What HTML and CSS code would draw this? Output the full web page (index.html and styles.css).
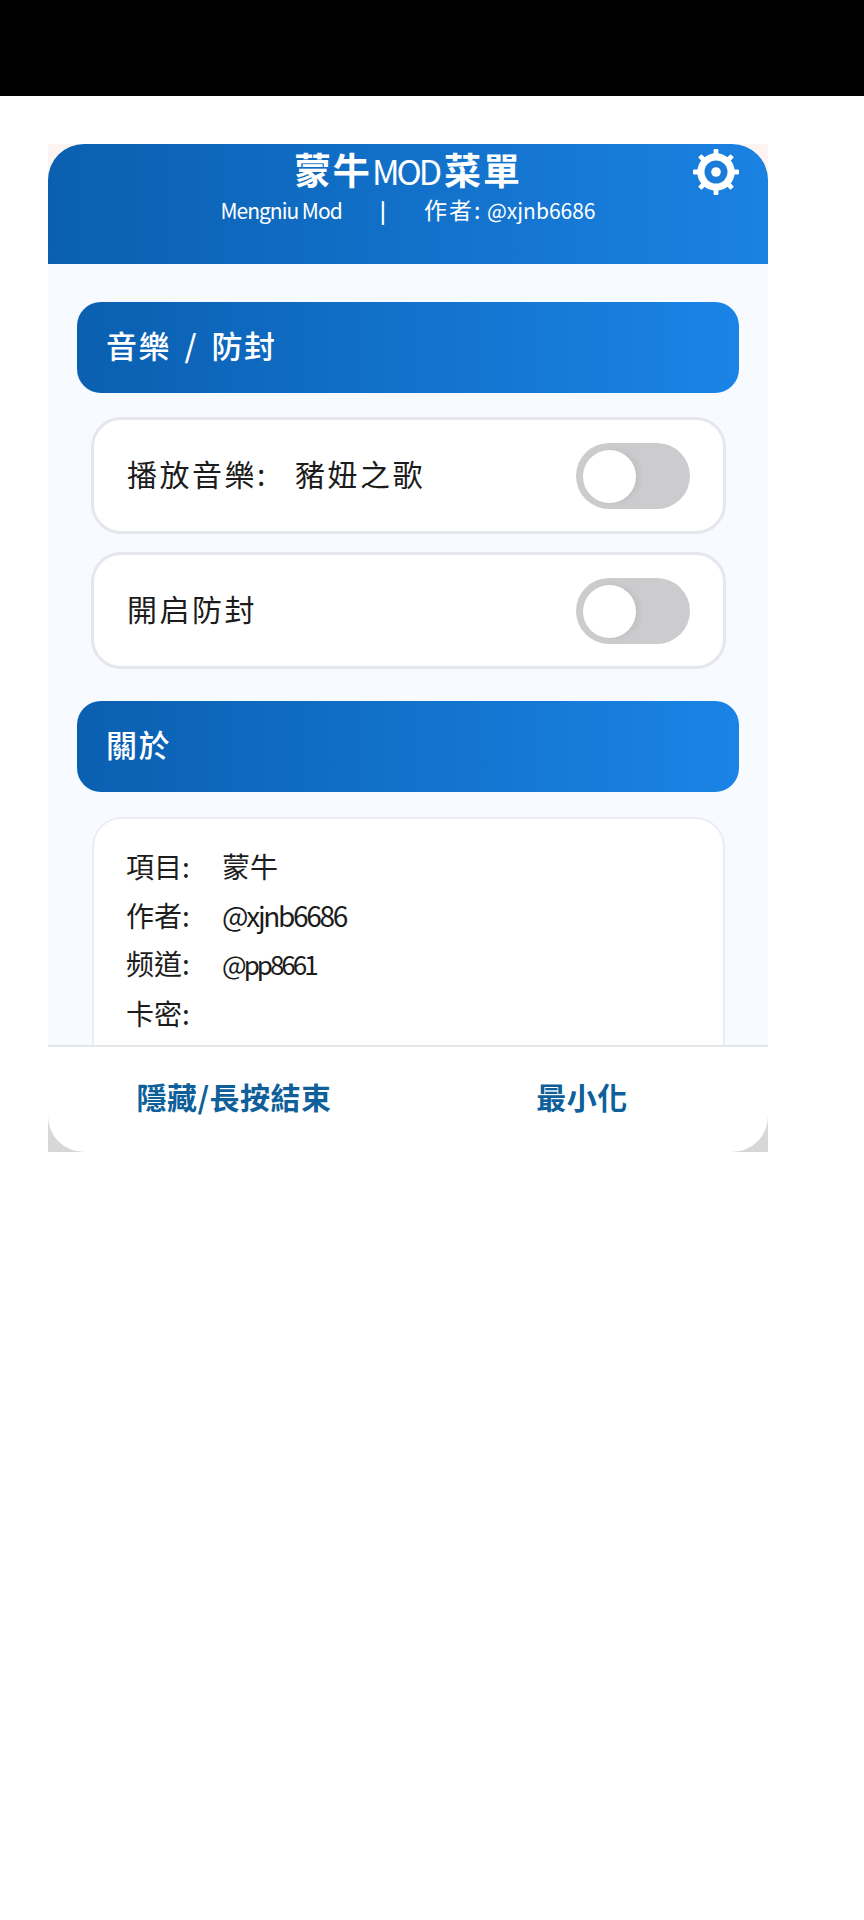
FILE: index.html
```html
<!DOCTYPE html>
<html lang="zh-Hant">
<head>
    <meta charset="UTF-8">
    <title>蒙牛MOD菜單</title>
    <link rel="stylesheet" href="styles.css">
</head>
<body>
    <div class="status-bar"></div>

    <div class="menu">
        <header class="menu-header">
            <h1 class="menu-title">蒙牛<span class="title-latin">MOD</span>菜單</h1>
            <p class="menu-sub"><span class="sub-name">Mengniu Mod</span><span class="sep">|</span><span class="sub-label">作者:</span> @xjnb6686</p>
            <svg class="gear" viewBox="0 0 48 48" aria-hidden="true">
                <g fill="#fff">
                    <rect x="21.5" y="0" width="5" height="48" rx="1"/>
                    <rect x="21.5" y="0" width="5" height="48" rx="1" transform="rotate(45 24 24)"/>
                    <rect x="21.5" y="0" width="5" height="48" rx="1" transform="rotate(90 24 24)"/>
                    <rect x="21.5" y="0" width="5" height="48" rx="1" transform="rotate(135 24 24)"/>
                    <circle cx="24" cy="24" r="19.5"/>
                </g>
                <circle cx="24" cy="24" r="12" fill="#1a7bd8"/>
                <circle cx="24" cy="24" r="5" fill="#fff"/>
            </svg>
        </header>

        <main class="menu-body">
            <h2 class="section-bar">音樂 / 防封</h2>
            <div class="row">
                <span class="row-label">播放音樂: 豬妞之歌</span>
                <span class="toggle"><span class="knob"></span></span>
            </div>
            <div class="row">
                <span class="row-label">開启防封</span>
                <span class="toggle"><span class="knob"></span></span>
            </div>

            <h2 class="section-bar section-about">關於</h2>
            <div class="about">
                <p>項目: 蒙牛</p>
                <p>作者: <span class="handle">@xjnb6686</span></p>
                <p>频道: <span class="handle handle-tight">@pp8661</span></p>
                <p>卡密:</p>
            </div>
        </main>

        <footer class="menu-footer">
            <button class="foot-btn">隱藏/長按結束</button>
            <button class="foot-btn">最小化</button>
        </footer>
    </div>
</body>
</html>
```

FILE: styles.css
```css
body {
    margin: 0;
    background-color: #fff;
    font-family: "Noto Sans CJK TC", "Noto Sans", sans-serif;
    height: 1920px;
    overflow: hidden;
}
.status-bar {
    height: 96px;
    background-color: #000;
}
.menu {
    width: 720px;
    height: 1008px;
    margin: 48px 0 0 48px;
    display: flex;
    flex-direction: column;
    background: linear-gradient(#fdf3f1 0, #f4f6fa 70%, #d6d6d6 100%);
}
.menu-header {
    position: relative;
    height: 120px;
    flex: none;
    box-sizing: border-box;
    padding-top: 5px;
    text-align: center;
    color: #fff;
    background: linear-gradient(90deg, #0a5fb0, #1a82e2);
    border-radius: 36px 36px 0 0;
}
.menu-title {
    margin: 0;
    font-size: 37px;
    line-height: 40px;
    font-weight: 700;
    letter-spacing: 2px;
}
.title-latin {
    font-size: 34px;
    font-weight: 400;
    letter-spacing: -3px;
    margin-right: 5px;
}
.menu-sub {
    margin: 3px 0 0;
    font-size: 21px;
    line-height: 30px;
}
.sub-name {
    letter-spacing: -1px;
}
.sub-label {
    font-size: 23px;
    letter-spacing: 2px;
}
.sep {
    margin: 0 38px;
    font-weight: 700;
}
.gear {
    position: absolute;
    top: 5px;
    right: 29px;
    width: 46px;
    height: 46px;
}
.menu-body {
    flex: 1;
    min-height: 0;
    overflow: hidden;
    background-color: #f7faff;
    padding: 38px 29px 0;
}
.section-bar {
    margin: 0;
    height: 91px;
    box-sizing: border-box;
    padding: 0 0 6px 29px;
    display: flex;
    align-items: center;
    font-size: 31px;
    font-weight: 500;
    letter-spacing: 1.5px;
    word-spacing: 5px;
    color: #fff;
    background: linear-gradient(90deg, #0a5fb0, #1a84e6);
    border-radius: 24px;
}
.section-about {
    margin-top: 32px;
}
.row {
    height: 117px;
    box-sizing: border-box;
    margin: 24px 13px 0 14px;
    padding: 0 33px 0 33px;
    display: flex;
    align-items: center;
    justify-content: space-between;
    font-size: 30px;
    color: #1c1c1c;
    background-color: #fff;
    border: 3px solid #e6e6ee;
    border-radius: 30px;
}
.row + .row {
    margin-top: 18px;
}
.row-label {
    position: relative;
    top: -3px;
    letter-spacing: 2.5px;
    word-spacing: 18px;
}
.toggle {
    width: 114px;
    height: 66px;
    box-sizing: border-box;
    padding: 7px;
    border-radius: 33px;
    background-color: #cccbce;
}
.knob {
    display: block;
    width: 53px;
    height: 53px;
    border-radius: 50%;
    background-color: #fff;
    box-shadow: 4px 0 6px rgba(0, 0, 0, 0.06);
}
.about {
    margin: 25px 14px 0 15px;
    padding: 23px 32px 0;
    height: 300px;
    font-size: 28px;
    color: #1c1c1c;
    background-color: #fff;
    border: 2px solid #ebedf3;
    border-radius: 30px;
    word-spacing: 26px;
}
.about p {
    margin: 0;
    line-height: 48.7px;
}
.handle {
    letter-spacing: -2.3px;
}
.handle-tight {
    font-size: 26px;
    letter-spacing: -3px;
}
.menu-footer {
    height: 107px;
    flex: none;
    box-sizing: border-box;
    display: grid;
    grid-template-columns: 1fr 1fr;
    padding: 0 12px 8px 12px;
    background-color: #fff;
    border-top: 2px solid #e4e6ea;
    border-radius: 0 0 36px 36px;
}
.foot-btn {
    border: none;
    background: none;
    padding: 0;
    font-family: inherit;
    font-size: 30px;
    font-weight: 700;
    letter-spacing: 0.5px;
    color: #0f5f9a;
}
```
